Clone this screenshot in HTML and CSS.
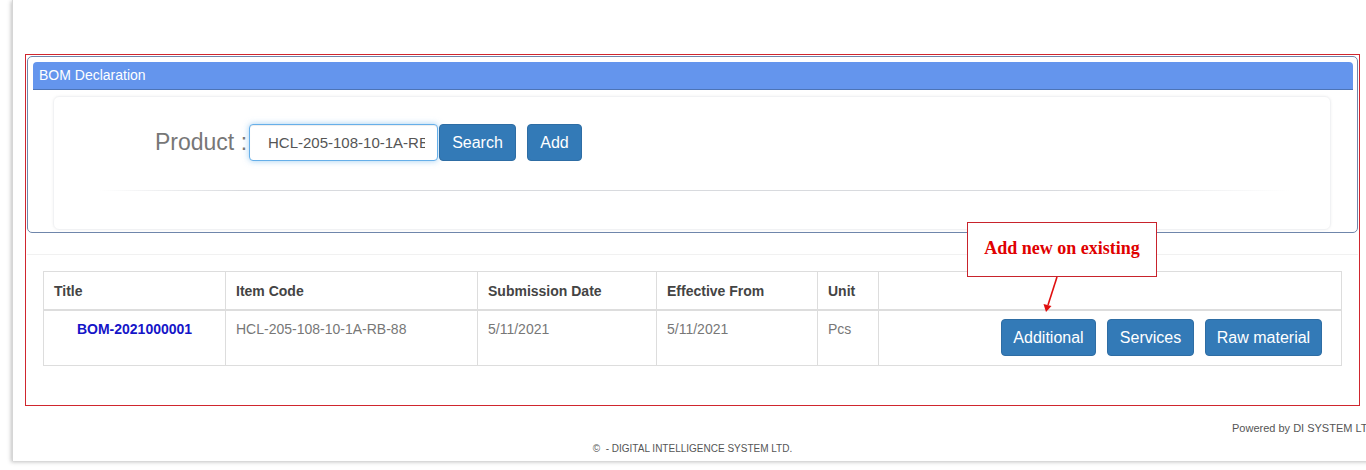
FILE: index.html
```html
<!DOCTYPE html>
<html>
<head>
<meta charset="utf-8">
<link rel="stylesheet" href="styles.css">
</head>
<body>
<div class="page">
  <div class="redbox">
    <div class="panel">
      <div class="panel-heading">BOM Declaration</div>
      <div class="well">
        <div class="search-row">
          <label class="product-label">Product :</label>
          <input class="product-input" type="text" value="HCL-205-108-10-1A-RB-88">
          <button class="btn btn-search">Search</button>
          <button class="btn btn-add">Add</button>
        </div>
        <div class="fade-rule"></div>
      </div>
    </div>
    <div class="list-section">
      <table class="grid">
        <colgroup>
          <col class="c1"><col class="c2"><col class="c3"><col class="c4"><col class="c5"><col>
        </colgroup>
        <thead>
          <tr><th>Title</th><th>Item Code</th><th>Submission Date</th><th>Effective From</th><th>Unit</th><th></th></tr>
        </thead>
        <tbody>
          <tr>
            <td class="title-cell"><a class="bom-link" href="#">BOM-2021000001</a></td>
            <td>HCL-205-108-10-1A-RB-88</td>
            <td>5/11/2021</td>
            <td>5/11/2021</td>
            <td>Pcs</td>
            <td class="actions"><div class="action-row"><button class="btn btn-additional">Additional</button><button class="btn btn-services">Services</button><button class="btn btn-raw">Raw material</button></div></td>
          </tr>
        </tbody>
      </table>
    </div>
    <div class="callout">Add new on existing</div>
    <svg class="callout-arrow" width="30" height="50" viewBox="0 0 30 50">
      <line x1="20" y1="2" x2="11" y2="30" stroke="#e01010" stroke-width="1.6"/>
      <polygon points="9,37 6.5,29 14.5,31" fill="#e01010"/>
    </svg>
  </div>
  <div class="powered">Powered by DI SYSTEM LTD</div>
  <div class="copyright">&copy; &nbsp;- DIGITAL INTELLIGENCE SYSTEM LTD.</div>
</div>
</body>
</html>
```
FILE: styles.css
```css
html, body {
  margin: 0;
  padding: 0;
  background: #fff;
  overflow: hidden;
  width: 1366px;
  height: 470px;
}
body {
  font-family: "Liberation Sans", Arial, sans-serif;
  font-size: 14px;
  color: #333;
}
.page {
  margin-left: 12px;
  width: 1380px;
  height: 461px;
  box-sizing: border-box;
  padding: 54px 0 0 12px;
  background: #fff;
  border-left: 1px solid #d6d6d6;
  box-shadow: -1px 1px 4px rgba(0,0,0,0.25);
}
.redbox {
  position: relative;
  width: 1335px;
  height: 352px;
  box-sizing: border-box;
  border: 1px solid #d0262e;
  padding: 1px;
}
.panel {
  height: 177px;
  box-sizing: border-box;
  border: 1px solid #6f86ab;
  border-radius: 5px;
  padding: 5px 4px 0 5px;
}
.panel-heading {
  height: 27px;
  line-height: 27px;
  background: #6495ed;
  border-bottom: 1px solid #4d74b6;
  border-radius: 4px 4px 0 0;
  color: #fff;
  padding-left: 6px;
  font-size: 14px;
}
.well {
  margin: 6px 22px 0 20px;
  height: 134px;
  box-sizing: border-box;
  border: 1px solid #f1f2f4;
  border-radius: 6px;
  box-shadow: 0 0 3px rgba(0,0,0,0.06);
  padding-top: 27px;
}
.search-row {
  display: flex;
  align-items: center;
  padding-left: 101px;
  height: 36px;
}
.product-label {
  font-size: 23px;
  color: #777;
  margin-right: 0;
  line-height: 36px;
  width: 94px;
  white-space: nowrap;
}
.product-input {
  width: 189px;
  height: 37px;
  box-sizing: border-box;
  border: 1px solid #66afe9;
  border-radius: 4px;
  box-shadow: inset 0 1px 1px rgba(0,0,0,.075), 0 0 6px rgba(102,175,233,.6);
  padding: 0 12px 0 18px;
  font-family: "Liberation Sans", Arial, sans-serif;
  font-size: 15px;
  color: #555;
  outline: none;
}
.btn {
  background: #337ab7;
  border: 1px solid #2e6da4;
  border-radius: 4px;
  color: #fff;
  font-family: "Liberation Sans", Arial, sans-serif;
  font-size: 16px;
  line-height: 23px;
  padding: 6px 0;
  height: 37px;
  box-sizing: border-box;
  cursor: pointer;
  text-align: center;
}
.btn-search {
  margin-left: 1px;
  width: 77px;
}
.btn-add {
  margin-left: 11px;
  width: 55px;
}
.fade-rule {
  height: 1px;
  margin: 30px 40px 0 45px;
  background: linear-gradient(to right, rgba(220,222,226,0), #d8dade 12%, #d8dade 80%, rgba(220,222,226,0));
}
.list-section {
  margin-top: 21px;
  border-top: 1px solid #f1f1f1;
  padding: 16px 16px 0 16px;
}
.grid {
  width: 1299px;
  border-collapse: collapse;
  table-layout: fixed;
}
.c1 { width: 182px; }
.c2 { width: 252px; }
.c3 { width: 179px; }
.c4 { width: 161px; }
.c5 { width: 61px; }
.grid th, .grid td {
  border: 1px solid #ddd;
  padding: 8px 10px;
  line-height: 20px;
  text-align: left;
  vertical-align: top;
}
.grid th {
  font-weight: bold;
  color: #444;
  font-size: 14px;
  border-bottom: 2px solid #ddd;
  padding: 9px 10px 8px 10px;
}
.grid td {
  color: #777;
  font-size: 14px;
  height: 38px;
}
.grid td.title-cell {
  text-align: center;
}
.bom-link {
  color: #1515c8;
  font-weight: bold;
  text-decoration: none;
}
.grid td.actions {
  padding: 8px 19px 8px 8px;
}
.action-row {
  display: flex;
  justify-content: flex-end;
  gap: 11px;
}
.btn-additional { width: 95px; }
.btn-services { width: 87px; }
.btn-raw { width: 117px; }
.callout {
  position: absolute;
  left: 941px;
  top: 167px;
  width: 190px;
  height: 55px;
  box-sizing: border-box;
  border: 1px solid #c8232c;
  background: #fff;
  color: #e00000;
  font-family: "Liberation Serif", "Times New Roman", serif;
  font-weight: bold;
  font-size: 18px;
  text-align: center;
  line-height: 50px;
}
.callout-arrow {
  position: absolute;
  left: 1011px;
  top: 220px;
}
.powered {
  margin-top: 16px;
  padding-left: 1207px;
  font-size: 11px;
  color: #555;
  white-space: nowrap;
}
.copyright {
  margin-top: 9px;
  width: 1335px;
  text-align: center;
  font-size: 10px;
  color: #555;
}
```
